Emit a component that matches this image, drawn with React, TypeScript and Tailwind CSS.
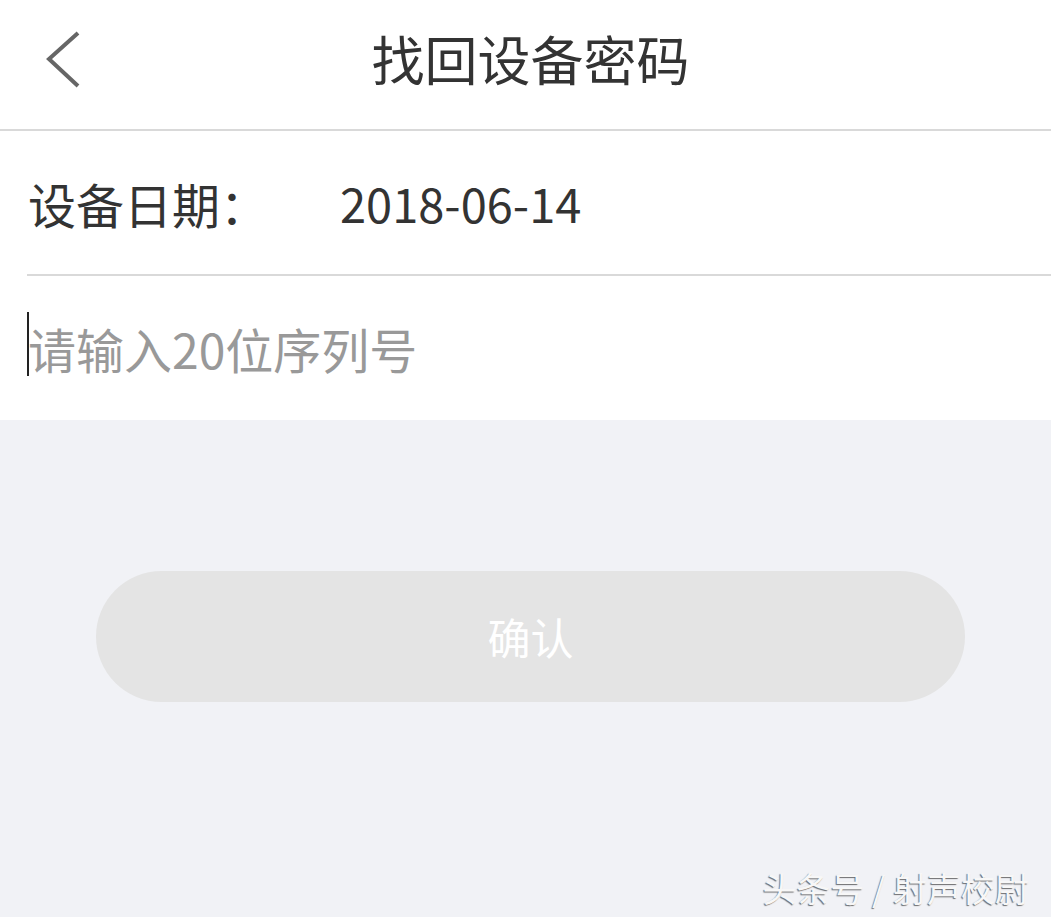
const font = { fontFamily: '"Noto Sans CJK SC", "Noto Sans", sans-serif' };

const App = () => {
  return (
    <main
      style={font}
      className="min-h-screen flex flex-col bg-[#f1f2f6]"
    >
      <header className="relative h-[131px] bg-white border-b-2 border-[#d9d9d9] flex items-center justify-center">
        <button className="absolute left-[44px] top-[30px] w-[40px] h-[60px]">
          <svg width="40" height="60" viewBox="0 0 40 60">
            <polyline
              points="34,3 5,29 34,56"
              fill="none"
              stroke="#666666"
              strokeWidth="4"
            />
          </svg>
        </button>
        <h1 className="text-[53px] leading-none text-[#333333] pb-[12px] pl-[10px]">
          找回设备密码
        </h1>
      </header>

      <section className="bg-white">
        <div className="ml-[27px] h-[145px] border-b-2 border-[#d9d9d9] flex items-center">
          <span className="text-[48px] leading-none text-[#333333] w-[313px] pl-px">
            设备日期：
          </span>
          <span className="text-[47px] leading-none text-[#333333]">
            2018-06-14
          </span>
        </div>
        <div className="h-[144px] flex items-center pl-[27px]">
          <span className="w-[2px] h-[64px] bg-[#222222] -mt-[8px]" />
          <span className="text-[48px] leading-none text-[#999999] -ml-px">
            请输入20位序列号
          </span>
        </div>
      </section>

      <section className="flex-1 flex flex-col">
        <div className="mt-[151px] ml-[96px] mr-[86px] h-[131px] rounded-full bg-[#e4e4e4] flex items-center justify-center">
          <span className="text-[43px] leading-none text-white">确认</span>
        </div>
        <div className="mt-auto flex justify-end pr-[22px] pb-[12px]">
          <span className="text-[34px] leading-none text-[#f7f7f7] [text-shadow:-1px_1px_1px_rgba(0,0,0,0.55)]">
            头条号 / 射声校尉
          </span>
        </div>
      </section>
    </main>
  );
};

export default App;
